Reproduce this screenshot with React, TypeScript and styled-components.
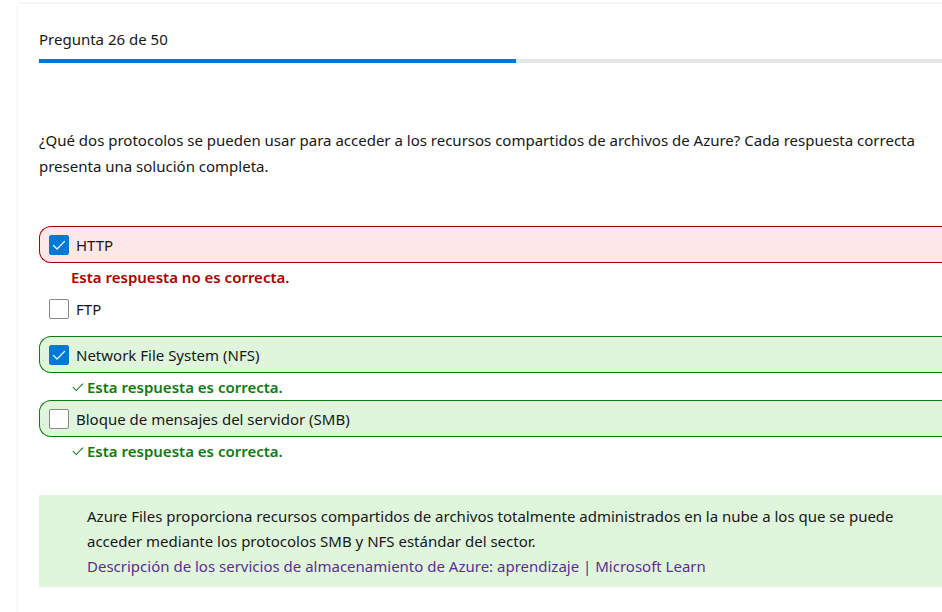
import React from 'react';
import styled, { createGlobalStyle } from 'styled-components';

const GlobalStyle = createGlobalStyle`
  html, body {
    margin: 0;
    padding: 0;
    background: #ffffff;
    overflow: hidden;
  }
  body {
    font-family: "Segoe UI", "Noto Sans", sans-serif;
    color: #171717;
  }
`;

type Status = 'wrong' | 'right' | 'none';

const Page = styled.div`
  padding: 4px 0 0 18px;
  width: 1000px;
`;

const Card = styled.div`
  background: #fff;
  box-shadow: 0 0 3px rgba(0, 0, 0, 0.12);
  padding: 25px 20px 40px 21px;
  min-height: 620px;
  box-sizing: border-box;
`;

const Header = styled.div`
  font-size: 15px;
  line-height: 20px;
  height: 20px;
`;

const Progress = styled.div`
  margin-top: 10px;
  height: 4px;
  width: 917px;
  background: #e6e6e6;
  display: flex;
`;

const ProgressFill = styled.div`
  height: 100%;
  background: #0078d4;
`;

const Question = styled.p`
  margin: 64px 0 0;
  width: 900px;
  font-size: 15px;
  line-height: 26px;
`;

const Options = styled.div`
  margin-top: 47px;
  display: flex;
  flex-direction: column;
  width: 940px;
`;

const Item = styled.div<{ $tight: boolean }>`
  display: flex;
  flex-direction: column;
  margin-bottom: ${(p) => (p.$tight ? '1px' : '9px')};
`;

const Row = styled.label<{ $status: Status }>`
  display: flex;
  align-items: center;
  gap: 7px;
  height: 37px;
  box-sizing: border-box;
  padding-left: 9px;
  border-radius: 12px 0 0 12px;
  border: 1px solid
    ${(p) => (p.$status === 'wrong' ? '#a80000' : p.$status === 'right' ? '#107c10' : 'transparent')};
  border-right: none;
  background: ${(p) => (p.$status === 'wrong' ? '#fde7e9' : p.$status === 'right' ? '#dff6dd' : 'transparent')};
  font-size: 15px;
`;

const Box = styled.span<{ $checked: boolean }>`
  width: 20px;
  height: 20px;
  box-sizing: border-box;
  border-radius: 2px;
  border: 1px solid ${(p) => (p.$checked ? '#0078d4' : '#8a8886')};
  background: ${(p) => (p.$checked ? '#0078d4' : '#fff')};
  display: flex;
  align-items: center;
  justify-content: center;
  flex-shrink: 0;
`;

const Feedback = styled.div<{ $ok: boolean }>`
  display: flex;
  align-items: center;
  gap: 2px;
  height: 26px;
  padding-top: 1px;
  box-sizing: border-box;
  padding-left: 32px;
  font-size: 15px;
  font-weight: 600;
  color: ${(p) => (p.$ok ? '#107c10' : '#a80000')};
`;

const Explanation = styled.div`
  margin-top: 31px;
  width: 940px;
  box-sizing: border-box;
  background: #dff6dd;
  padding: 9px 60px 8px 48px;
  font-size: 15px;
  line-height: 25px;
`;

const Link = styled.a`
  color: #5c2d91;
  text-decoration: none;
`;

const Tick = ({ color, size }: { color: string; size: number }) => (
  <svg width={size} height={size} viewBox="0 0 16 16" fill="none">
    <path d="M2.5 8.5 L6 12 L13.5 4.5" stroke={color} strokeWidth="1.2" strokeLinecap="round" strokeLinejoin="round" />
  </svg>
);

const options: { label: string; checked: boolean; status: Status; feedback?: 'ok' | 'bad' }[] = [
  { label: 'HTTP', checked: true, status: 'wrong', feedback: 'bad' },
  { label: 'FTP', checked: false, status: 'none' },
  { label: 'Network File System (NFS)', checked: true, status: 'right', feedback: 'ok' },
  { label: 'Bloque de mensajes del servidor (SMB)', checked: false, status: 'right', feedback: 'ok' },
];

const current = 26;
const total = 50;

export default function App() {
  return (
    <>
      <GlobalStyle />
      <Page>
        <Card>
          <Header>
            Pregunta {current} de {total}
          </Header>
          <Progress>
            <ProgressFill style={{ width: `${(current / total) * 100}%` }} />
          </Progress>
          <Question>
            ¿Qué dos protocolos se pueden usar para acceder a los recursos compartidos de archivos de Azure? Cada
            respuesta correcta presenta una solución completa.
          </Question>
          <Options>
            {options.map((o) => (
              <Item key={o.label} $tight={!!o.feedback}>
                <Row $status={o.status}>
                  <Box $checked={o.checked}>{o.checked && <Tick color="#fff" size={16} />}</Box>
                  {o.label}
                </Row>
                {o.feedback === 'bad' && <Feedback $ok={false}>Esta respuesta no es correcta.</Feedback>}
                {o.feedback === 'ok' && (
                  <Feedback $ok>
                    <Tick color="#107c10" size={14} />
                    Esta respuesta es correcta.
                  </Feedback>
                )}
              </Item>
            ))}
          </Options>
          <Explanation>
            Azure Files proporciona recursos compartidos de archivos totalmente administrados en la nube a los que se
            puede acceder mediante los protocolos SMB y NFS estándar del sector.
            <br />
            <Link href="#">Descripción de los servicios de almacenamiento de Azure: aprendizaje | Microsoft Learn</Link>
          </Explanation>
        </Card>
      </Page>
    </>
  );
}
